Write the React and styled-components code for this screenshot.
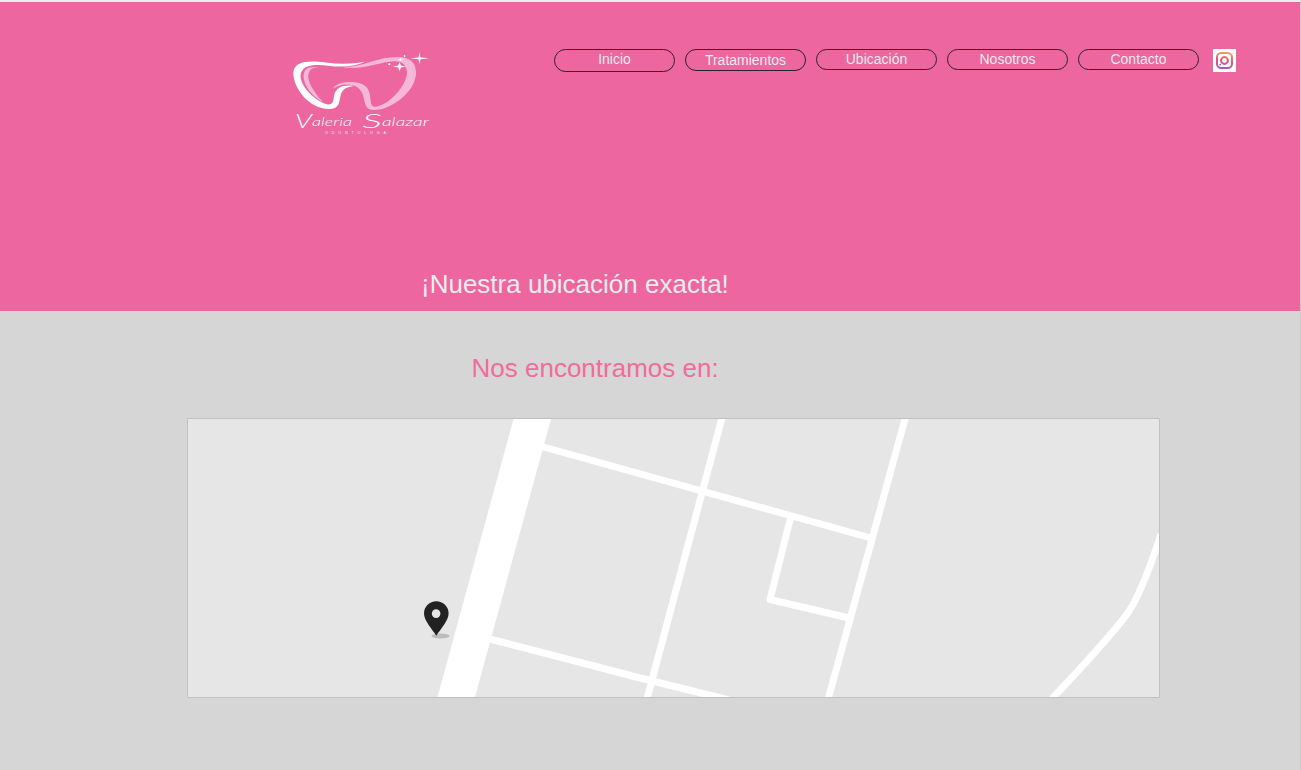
import React from "react";
import styled, { createGlobalStyle } from "styled-components";

const GlobalStyle = createGlobalStyle`
  * { box-sizing: border-box; }
  body { margin: 0; background: #d6d6d6; font-family: "Liberation Sans", Arial, sans-serif; }
`;

const Page = styled.div`
  display: flex;
  flex-direction: column;
  height: 770px;
  border-top: 2px solid #ececec;
  border-right: 1px solid #c9c9c9;
  overflow: hidden;
`;

const Hero = styled.header`
  display: flex;
  flex-direction: column;
  justify-content: space-between;
  height: 309px;
  background: #ed66a0;
`;

const TopBar = styled.div`
  display: flex;
  align-items: flex-start;
  padding: 47px 0 0 284px;
`;

const Logo = styled.svg`
  display: block;
  width: 160px;
  height: 92px;
  margin-right: 110px;
`;

const Nav = styled.nav`
  display: flex;
  align-items: flex-start;
  gap: 10px;
`;

const NavLink = styled.a`
  width: 121px;
  height: ${(p) => p.$height || 21}px;
  padding-top: ${(p) => p.$drop || 1}px;
  border: 1px solid #2a2228;
  border-radius: 12px;
  color: #ececec;
  font-size: 14px;
  line-height: 17px;
  text-align: center;
`;

const Social = styled.a`
  display: flex;
  align-items: center;
  justify-content: center;
  width: 23px;
  height: 23px;
  margin-left: 14px;
  background: #fff;
`;

const Title = styled.h1`
  margin: 0;
  padding: 0 0 12px 421px;
  color: #ececec;
  font-size: 26px;
  font-weight: 400;
  line-height: 30px;
`;

const Location = styled.main`
  display: flex;
  flex-direction: column;
  padding: 42px 140px 0 187px;
`;

const Subtitle = styled.h2`
  margin: 0 0 35px;
  padding-left: 284.5px;
  color: #f26b9c;
  font-size: 26px;
  font-weight: 400;
  line-height: 30px;
`;

const MapFrame = styled.div`
  width: 973px;
  height: 280px;
  border: 1px solid #c0c0c0;
  border-radius: 1px;
  background: #e6e6e6;
`;

const MapDrawing = styled.svg`
  display: block;
  width: 100%;
  height: 100%;
`;

function BrandLogo() {
  return (
    <Logo viewBox="284 49 160 92" role="img" aria-label="Valeria Salazar">
      <path
        fill="#fff"
        d="M365 61.5C355 64 340 64.5 326 62.5C308 60.5 294 61 293.3 73C293.3 88 309 109 329 109C339 109 339 103 340.3 97C341.5 90 345 87 354 86C344 84.5 335.5 87 334 96C333.3 101 333 105.5 327 104.3C313 100 301 86 300.5 76C301 64 316 64 330 66C345 67.5 357 66 365 61.5Z"
      />
      <path
        fill="#f6b8d8"
        d="M319 67.3C308 66 303.7 69 303.5 77C304.5 87 313 97 323 102.3C315 93 308.5 84 308.3 77C308.3 70 312 67.5 319 67.3Z"
      />
      <path
        fill="#f6b8d8"
        d="M343 67.3C363 67 377 57 397 57C411 57 416 63 416 73C416 91 392 110 374 110C365 110 365 103 363.5 97C362 89 356 84.5 347 84.5C341 84.5 337 86.5 333 88.5C336 84 342 82 350 82C364 82 369 87 370 96C371 103 371 106.7 375 106.7C386 106.7 406 88 407 73C407 63 400 60 391 61.5C372 64 362 70 343 67.3Z"
      />
      <path fill="#fff" d="M419.5 52L420.5 57.4L429 58.3L420.5 59.2L419.5 64L418.5 59.2L410 58.3L418.5 57.4Z" />
      <path fill="#fff" d="M399.5 62L400.9 65.5L406 66.5L400.9 67.5L399.5 71L398.1 67.5L393 66.5L398.1 65.5Z" />
      <path fill="#fff" d="M400.5 57.4L401.2 59L403.4 59.5L401.2 60L400.5 61.6L399.8 60L397.6 59.5L399.8 59Z" />
      <circle cx="404.5" cy="56" r="0.9" fill="#fff" />
      <circle cx="389.3" cy="64.2" r="1.1" fill="#fff" />
      <g fill="#fff" fontFamily="Lato, sans-serif" fontStyle="italic" fontWeight="300">
        <text x="295" y="128" fontSize="19" textLength="17" lengthAdjust="spacingAndGlyphs">V</text>
        <text x="312" y="125.5" fontSize="12" textLength="40" lengthAdjust="spacingAndGlyphs">aleria</text>
        <text x="362" y="128" fontSize="19" textLength="20" lengthAdjust="spacingAndGlyphs">S</text>
        <text x="382" y="125.5" fontSize="12" textLength="47" lengthAdjust="spacingAndGlyphs">alazar</text>
      </g>
      <text x="325" y="134.3" fill="#fff" fillOpacity="0.9" fontFamily="Liberation Sans, sans-serif" fontSize="3.8" textLength="61">
        ODONTOLOGA
      </text>
    </Logo>
  );
}

function InstagramIcon() {
  return (
    <svg width="19" height="19" viewBox="0 0 19 19" fill="none" stroke="url(#insta)" strokeWidth="2">
      <defs>
        <linearGradient id="insta" gradientUnits="userSpaceOnUse" x1="12" y1="1" x2="9" y2="18">
          <stop offset="0" stopColor="#f8a06a" />
          <stop offset="0.5" stopColor="#df5475" />
          <stop offset="1" stopColor="#a15bcc" />
        </linearGradient>
      </defs>
      <rect x="2" y="2" width="15" height="15" rx="4.2" />
      <circle cx="9.5" cy="9.5" r="3.4" />
      <path d="M4.6 14.1L5.8 13" strokeWidth="1.6" />
    </svg>
  );
}

function LocationMap() {
  return (
    <MapDrawing viewBox="188 419 971 278" role="img" aria-label="Mapa">
      <path d="M513.5 419H551L475 697H437.5Z" fill="#fff" />
      <g fill="none" stroke="#fff" strokeWidth="7" strokeLinejoin="round">
        <path d="M722.8 415L646.4 701" />
        <path d="M906.1 415L827.6 701" />
        <path d="M540 446L871 538" />
        <path d="M790.5 518L770 599.5L849 618" />
        <path d="M486 638L640 678L729 700" />
        <path d="M1161 534C1150 568 1141 592 1129.5 610.5C1115 632 1078 671 1050 701" />
      </g>
      <ellipse cx="440.5" cy="636" rx="9" ry="2.5" fill="#bcbcbc" />
      <path
        d="M436.3 635.7C432 629 424 620.5 424 613.5A12.3 12.3 0 0 1 448.6 613.5C448.6 620.5 440.6 629 436.3 635.7Z"
        fill="#222"
      />
      <circle cx="436.1" cy="613.6" r="4.3" fill="#e6e6e6" />
    </MapDrawing>
  );
}

export default function App() {
  return (
    <>
      <GlobalStyle />
      <Page>
        <Hero>
          <TopBar>
            <BrandLogo />
            <Nav>
              <NavLink $height={23}>Inicio</NavLink>
              <NavLink $height={22} $drop={2}>Tratamientos</NavLink>
              <NavLink>Ubicación</NavLink>
              <NavLink>Nosotros</NavLink>
              <NavLink>Contacto</NavLink>
            </Nav>
            <Social aria-label="Instagram">
              <InstagramIcon />
            </Social>
          </TopBar>
          <Title>¡Nuestra ubicación exacta!</Title>
        </Hero>
        <Location>
          <Subtitle>Nos encontramos en:</Subtitle>
          <MapFrame>
            <LocationMap />
          </MapFrame>
        </Location>
      </Page>
    </>
  );
}
